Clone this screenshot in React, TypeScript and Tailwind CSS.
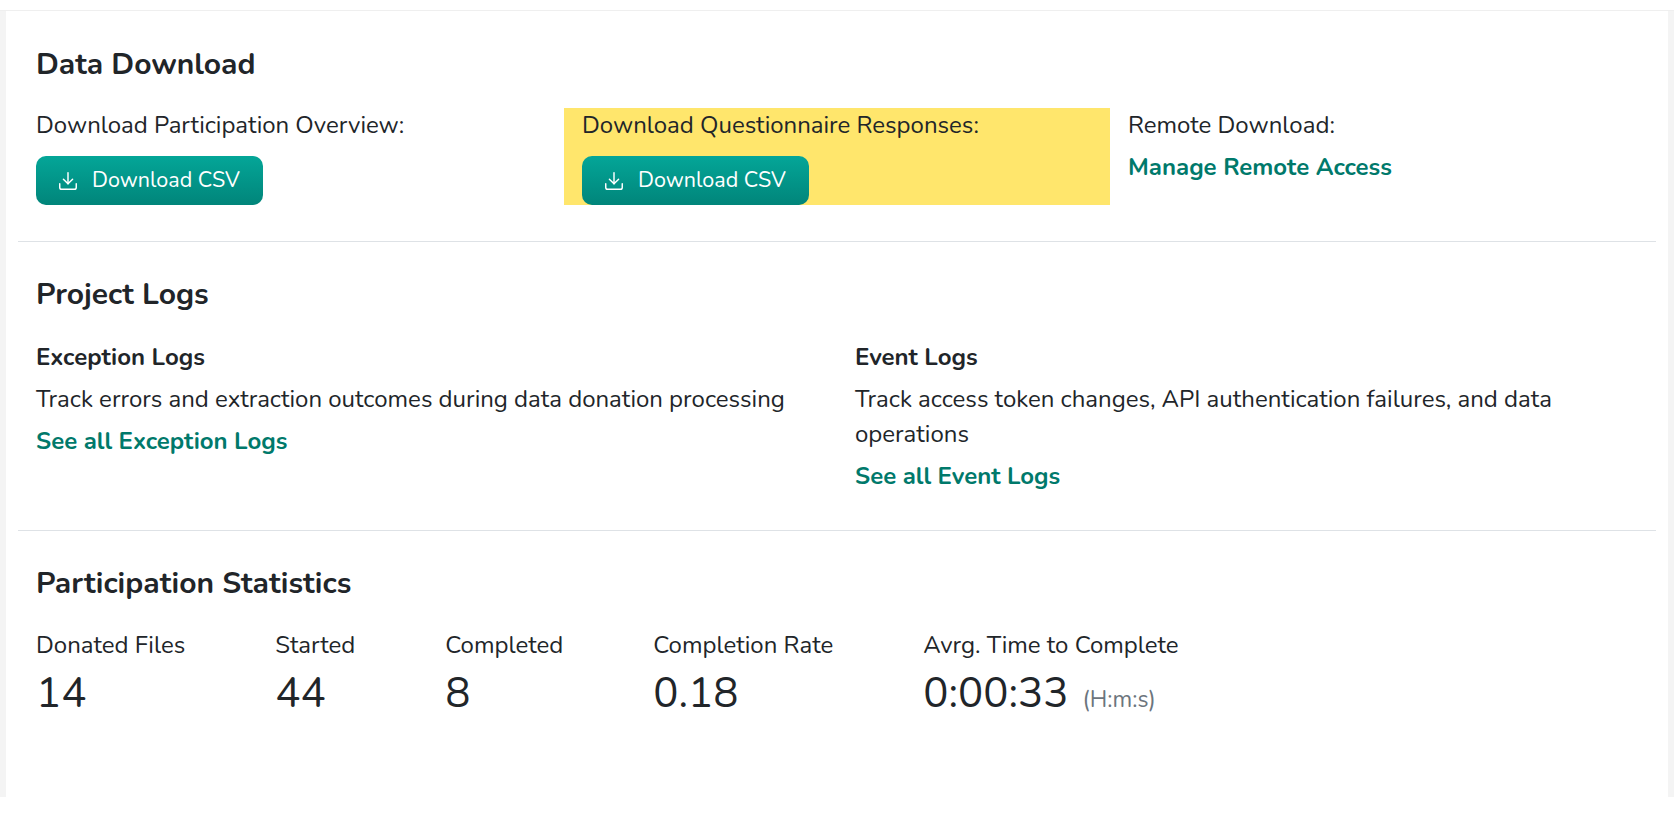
import { Download } from 'lucide-react'

const DownloadButton = () => {
  return (
    <button className="inline-flex h-[49px] items-center gap-[13px] rounded-[10px] bg-gradient-to-b from-[#04a698] to-[#01857a] pl-[21px] pr-[23px] text-[21.5px] text-white">
      <Download size={22} strokeWidth={1.6} />
      <span>Download CSV</span>
    </button>
  )
}

const Stat = ({ label, value, unit }: { label: string; value: string; unit?: string }) => {
  return (
    <div>
      <div className="text-[24px] leading-[35px]">{label}</div>
      <div className="mt-[6px] flex items-baseline">
        <span className="text-[42px] leading-[1.2]">{value}</span>
        {unit && <span className="ml-[14px] text-[23px] text-[#6c757d]">{unit}</span>}
      </div>
    </div>
  )
}

export default function App() {
  return (
    <div className="min-h-screen bg-white pt-[10px] font-['Nunito','Lato',sans-serif] text-[#212529]">
      <div className="border-t border-[#efefef] bg-[#f4f4f4] px-[6px]">
        <div className="h-[786px] bg-white px-3">
          {/* Data download */}
          <section className="border-b border-[#dee2e6] pt-[36px] pb-[36px]">
            <h2 className="px-[18px] text-[30px] font-bold leading-[1.2]">Data Download</h2>
            <div className="mt-[25px] grid grid-cols-3">
              <div className="px-[18px]">
                <p className="text-[24px] leading-[35px]">Download Participation Overview:</p>
                <div className="mt-[13px]">
                  <DownloadButton />
                </div>
              </div>
              <div className="bg-[#ffe66c] px-[18px]">
                <p className="text-[24px] leading-[35px]">Download Questionnaire Responses:</p>
                <div className="mt-[13px] flex">
                  <DownloadButton />
                </div>
              </div>
              <div className="px-[18px]">
                <p className="text-[24px] leading-[35px]">Remote Download:</p>
                <a href="#" className="mt-[7px] block text-[24px] font-bold leading-[35px] text-[#00796b]">
                  Manage Remote Access
                </a>
              </div>
            </div>
          </section>

          {/* Project logs */}
          <section className="border-b border-[#dee2e6] pt-[35px] pb-[36px]">
            <h2 className="px-[18px] text-[30px] font-bold leading-[1.2]">Project Logs</h2>
            <div className="mt-[27px] grid grid-cols-2">
              <div className="flex flex-col gap-[7px] px-[18px] text-[24px] leading-[35px]">
                <h3 className="font-bold">Exception Logs</h3>
                <p>Track errors and extraction outcomes during data donation processing</p>
                <a href="#" className="font-bold text-[#00796b]">See all Exception Logs</a>
              </div>
              <div className="flex flex-col gap-[7px] px-[18px] text-[24px] leading-[35px]">
                <h3 className="font-bold">Event Logs</h3>
                <p>Track access token changes, API authentication failures, and data operations</p>
                <a href="#" className="font-bold text-[#00796b]">See all Event Logs</a>
              </div>
            </div>
          </section>

          {/* Participation statistics */}
          <section className="px-[18px] pt-[35px]">
            <h2 className="text-[30px] font-bold leading-[1.2]">Participation Statistics</h2>
            <div className="mt-[26px] flex gap-[90px]">
              <Stat label="Donated Files" value="14" />
              <Stat label="Started" value="44" />
              <Stat label="Completed" value="8" />
              <Stat label="Completion Rate" value="0.18" />
              <Stat label="Avrg. Time to Complete" value="0:00:33" unit="(H:m:s)" />
            </div>
          </section>
        </div>
      </div>
    </div>
  )
}
